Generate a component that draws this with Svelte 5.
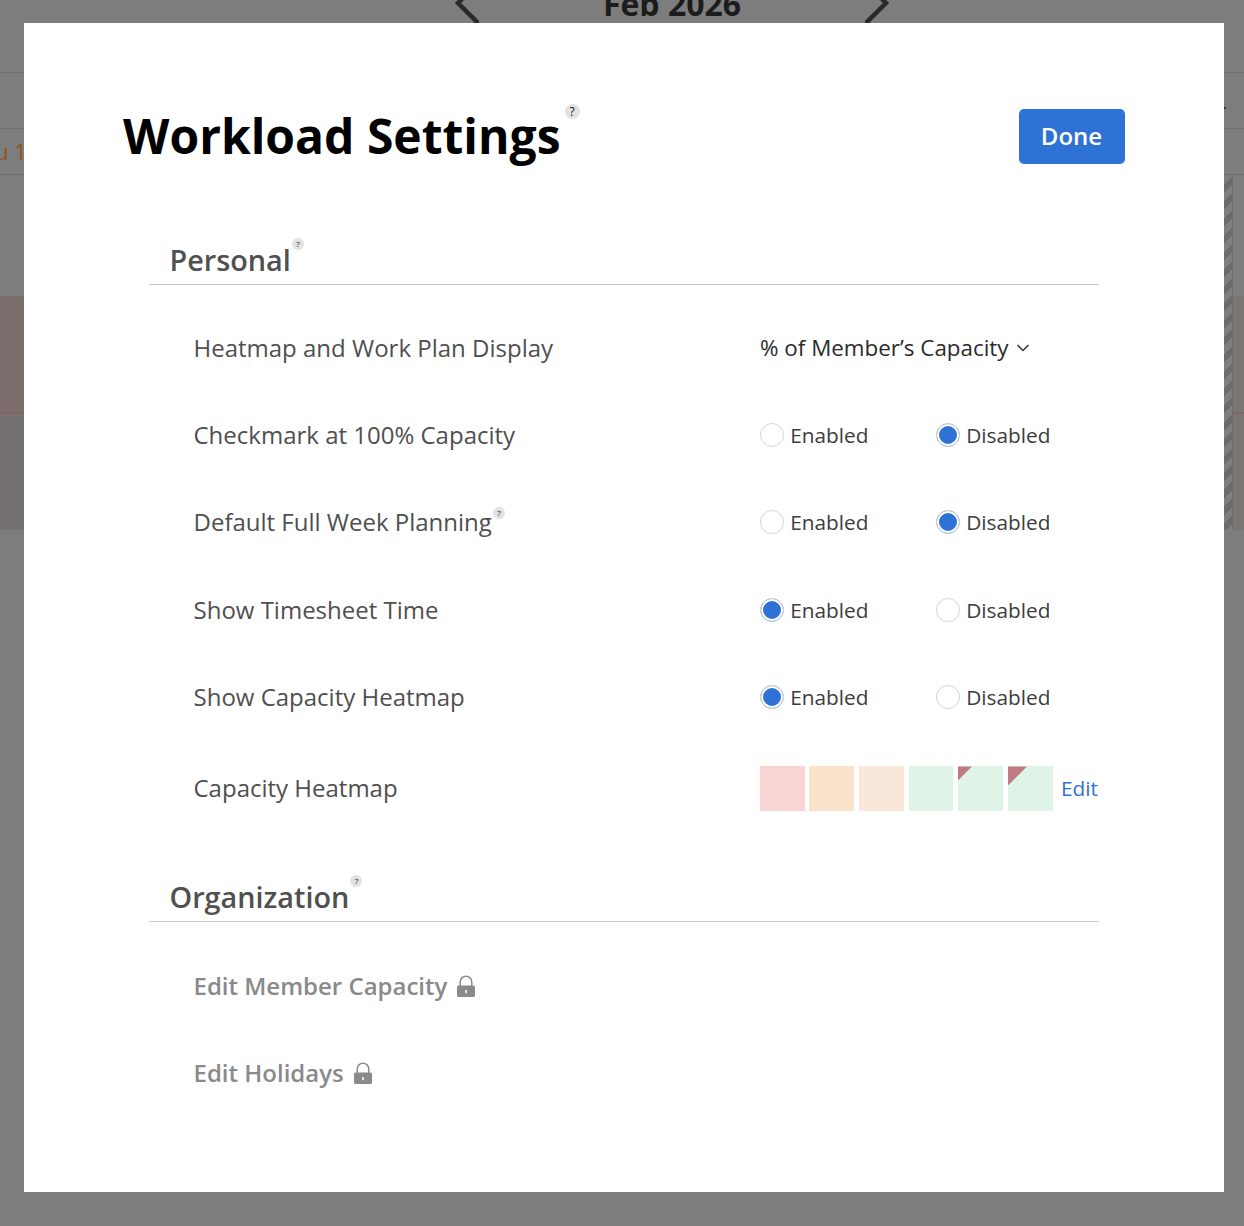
<script>
	const binary = [
		{ label: 'Checkmark at 100% Capacity', on: false },
		{ label: 'Default Full Week Planning', on: false, help: true },
		{ label: 'Show Timesheet Time', on: true },
		{ label: 'Show Capacity Heatmap', on: true }
	]

	const swatches = [
		{ color: '#f8d4d2' },
		{ color: '#fbe2cb' },
		{ color: '#f9e8d9' },
		{ color: '#dff3e7', narrow: true },
		{ color: '#dff3e7', flag: 14 },
		{ color: '#dff3e7', flag: 19 }
	]
</script>

{#snippet help(size)}
	<span class="help {size}">?</span>
{/snippet}

{#snippet lock()}
	<svg class="lock" viewBox="0 0 18 22" width="18" height="22">
		<path d="M3.200 12V7a5.800 5.800 0 0 1 11.600 0v5" fill="none" stroke="#8a8a8a" stroke-width="1.500" />
		<path fill-rule="evenodd" fill="#8a8a8a" d="M1.500 10.500h15a1.500 1.500 0 0 1 1.500 1.500v8.500a1.500 1.500 0 0 1-1.500 1.500h-15a1.500 1.500 0 0 1-1.500-1.500v-8.500a1.500 1.500 0 0 1 1.500-1.500zM8.200 15v3.300h1.600v-3.300z" />
	</svg>
{/snippet}

<div class="page">
	<div class="date-bar">
		<svg class="chev" viewBox="0 0 24 24" width="24" height="24"><path d="M24 -18L3 3L24 24" fill="none" stroke="#2a2a2a" stroke-width="4.500" /></svg>
		<span class="date">Feb 2026</span>
		<svg class="chev" viewBox="0 0 24 24" width="24" height="24"><path d="M0 -18L21 3L0 24" fill="none" stroke="#2a2a2a" stroke-width="4.500" /></svg>
	</div>
	<div class="toolbar"></div>
	<div class="days"><span class="day">u 1</span></div>
	<div class="gap"></div>
	<div class="band first"></div>
	<div class="band second"></div>
	<div class="stripes"></div>
	<div class="tick"></div>
</div>

<div class="modal">
	<header>
		<h1>Workload Settings{@render help('big')}</h1>
		<button>Done</button>
	</header>

	<section class="personal">
		<h2>Personal{@render help('small')}</h2>

		<div class="row first">
			<div class="label">Heatmap and Work Plan Display</div>
			<div class="select">
				% of Member’s Capacity
				<svg viewBox="0 0 14 14" width="14" height="14"><path d="M1.500 4L7 9.500L12.500 4" fill="none" stroke="#333" stroke-width="1.500" /></svg>
			</div>
		</div>

		{#each binary as item}
			<div class="row">
				<div class="label">{item.label}{#if item.help}{@render help('small')}{/if}</div>
				<div class="radios">
					<span class="radio"><i class:checked={item.on}></i>Enabled</span>
					<span class="radio"><i class:checked={!item.on}></i>Disabled</span>
				</div>
			</div>
		{/each}

		<div class="row heat">
			<div class="label">Capacity Heatmap</div>
			<div class="swatches">
				{#each swatches as s}
					<span class="swatch" class:narrow={s.narrow} style:background={s.color}>
						{#if s.flag}<b style:--flag="{s.flag}px"></b>{/if}
					</span>
				{/each}
				<span class="edit">Edit</span>
			</div>
		</div>
	</section>

	<section class="org">
		<h2>Organization{@render help('small')}</h2>
		<div class="row first muted"><div class="label">Edit Member Capacity{@render lock()}</div></div>
		<div class="row muted"><div class="label">Edit Holidays{@render lock()}</div></div>
	</section>
</div>

<style>
	:global(body) {
		margin: 0;
		background: #7d7d7d;
		font-family: "Open Sans", "Liberation Sans", sans-serif;
	}

	.page {
		position: relative;
		height: 1226px;
		overflow: hidden;
		background: #7d7d7d;
	}

	.date-bar {
		height: 73px;
		box-sizing: border-box;
		display: flex;
		justify-content: center;
		align-items: flex-start;
		gap: 124px;
		padding-left: 100px;
		border-bottom: 1px solid #707070;
	}

	.date {
		margin-top: -15px;
		font-size: 32px;
		line-height: 38px;
		font-weight: 700;
		color: #1c1c1c;
	}

	.toolbar {
		height: 55px;
		border-bottom: 1px solid #6c6c6c;
	}

	.days {
		height: 45px;
		border-bottom: 1px solid #6c6c6c;
		color: #8f5426;
		font-size: 22px;
		line-height: 44px;
		margin-left: -5px;
	}

	.gap { height: 121px; }

	.band {
		height: 116px;
		background: linear-gradient(90deg, #7a6d6b 1233px, #7b7674 1233px);
	}

	.band.first { border-bottom: 2px solid #7f6664; }
	.band.second { background: linear-gradient(90deg, #767171 1233px, #7b7674 1233px); }

	.stripes {
		position: absolute;
		left: 1224px;
		top: 176px;
		width: 8px;
		height: 354px;
		background: repeating-linear-gradient(135deg, #7f7f7f 0 6px, #6b6b6b 6px 12px);
		border-right: 1px solid #6c6c6c;
	}

	.tick {
		position: absolute;
		left: 1224px;
		top: 107px;
		width: 2px;
		height: 2px;
		background: #333;
	}

	.modal {
		position: absolute;
		left: 24px;
		top: 23px;
		width: 1200px;
		height: 1169px;
		box-sizing: border-box;
		background: #fff;
		padding: 85px 99px 0;
	}

	header {
		display: flex;
		justify-content: space-between;
		align-items: flex-start;
		height: 120px;
	}

	h1 {
		margin: 0;
		font-size: 48px;
		line-height: 55px;
		font-weight: 700;
		color: #000;
	}

	button {
		width: 106px;
		height: 55px;
		margin-top: 1px;
		padding: 0 1px 2px 0;
		border: 0;
		border-radius: 5px;
		background: #2f72d6;
		color: #fff;
		font: 600 24px "Open Sans", sans-serif;
	}

	section {
		width: 950px;
		margin-left: 26px;
	}

	h2 {
		margin: 0;
		padding: 9px 0 0 20.500px;
		height: 57px;
		box-sizing: border-box;
		border-bottom: 1px solid #c9c9c9;
		font-size: 28.800px;
		line-height: 46px;
		font-weight: 600;
		color: #505050;
	}

	.help {
		display: inline-block;
		border-radius: 50%;
		background: #e2e2e2;
		color: #111;
		text-align: center;
		font-weight: 400;
		vertical-align: top;
	}

	.help.big {
		width: 15px;
		height: 15px;
		font-size: 12px;
		line-height: 15px;
		margin: -4px 0 0 4px;
	}

	.help.small {
		width: 12px;
		height: 12px;
		font-size: 8px;
		line-height: 12px;
		margin: 1px 0 0 1px;
	}

	.row {
		display: flex;
		align-items: center;
		height: 87.300px;
		padding-left: 44.500px;
		font-size: 24px;
		color: #4f4f4f;
	}

	.row.first { margin-top: 19px; }
	.row.heat { height: 95px; margin-bottom: 30px; }
	.org .row.first { margin-top: 20px; }

	.label {
		width: 566.500px;
		flex: none;
		line-height: 32px;
		white-space: nowrap;
	}

	.select {
		display: flex;
		align-items: center;
		gap: 7px;
		font-size: 22.400px;
		color: #2b2b2b;
	}

	.radios { display: flex; }

	.radio {
		display: flex;
		align-items: center;
		width: 176px;
		font-size: 20.800px;
		color: #3d3d3d;
	}

	.radio i {
		flex: none;
		width: 24px;
		height: 24px;
		box-sizing: border-box;
		margin-right: 6.200px;
		border-radius: 50%;
		border: 1px solid #d4d4d4;
		background: #fff;
	}

	.radio i.checked {
		background: #2f72d6;
		box-shadow: inset 0 0 0 2px #fff;
	}

	.swatches {
		display: flex;
		align-items: center;
		gap: 5px;
		padding-top: 2px;
	}

	.swatch {
		position: relative;
		width: 45px;
		height: 45px;
		overflow: hidden;
	}

	.swatch:first-child { margin-right: -1px; }
	.swatch.narrow { width: 44px; }

	.swatch b {
		position: absolute;
		left: 0;
		top: 0;
		width: var(--flag);
		height: var(--flag);
		background: #bf7b82;
		clip-path: polygon(0 0, 100% 0, 0 100%);
	}

	.edit {
		margin: -2px 0 0 3px;
		font-size: 20.800px;
		color: #2f72d6;
	}

	.muted .label {
		display: flex;
		align-items: center;
		gap: 10px;
		font-weight: 600;
		color: #8a8a8a;
	}

	.lock { flex: none; }
</style>
